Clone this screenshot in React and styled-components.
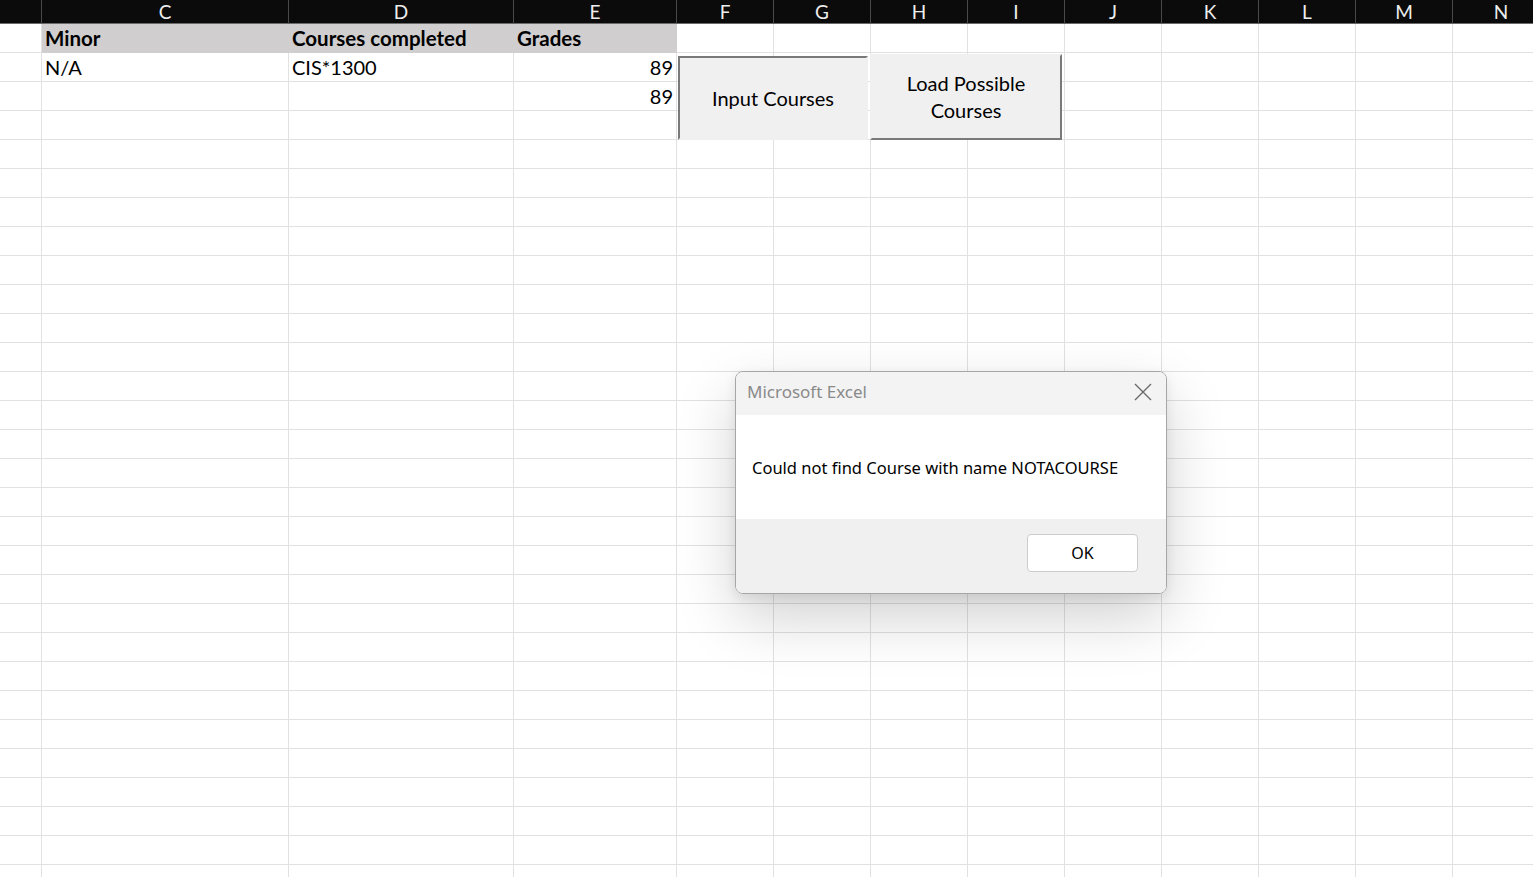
import React from "react";
import styled, { createGlobalStyle } from "styled-components";

const GlobalStyle = createGlobalStyle`
  html, body {
    margin: 0;
    padding: 0;
    background: #ffffff;
    overflow: hidden;
  }
  * { box-sizing: border-box; }
`;

const COLS = [42, 247, 225, 163, 97, 97, 97, 97, 97, 97, 97, 97, 97];
const LETTERS = ["", "C", "D", "E", "F", "G", "H", "I", "J", "K", "L", "M", "N"];
const ROW_COUNT = 30;

// Fenêtre de la feuille
const Sheet = styled.div`
  position: relative;
  width: 1533px;
  height: 877px;
  overflow: hidden;
  font-family: Lato, "Liberation Sans", sans-serif;
`;

const Grid = styled.div`
  display: grid;
  grid-template-columns: ${COLS.map((w) => w + "px").join(" ")};
  grid-auto-rows: 29px;
  grid-template-rows: 24px;
`;

const ColHead = styled.div`
  background: #0b0b0b;
  color: #eeeeee;
  font-size: 19px;
  line-height: 23px;
  text-align: center;
  border-right: 1px solid #4a4a4a;
  border-bottom: 1px solid #6a6a6a;
`;

const Cell = styled.div`
  border-right: 1px solid ${(p) => (p.$filled ? "#d0cece" : "#e1e1e1")};
  border-bottom: 1px solid ${(p) => (p.$filled ? "#d0cece" : "#e1e1e1")};
  background: ${(p) => (p.$filled ? "#d0cece" : "#ffffff")};
  font-size: ${(p) => (p.$bold ? "20.5px" : "20px")};
  font-weight: ${(p) => (p.$bold ? 700 : 400)};
  color: #000;
  line-height: 29px;
  padding: 0 3px 0 3px;
  text-align: ${(p) => (p.$num ? "right" : "left")};
  white-space: nowrap;
  overflow: visible;
`;

// Boutons de formulaire posés sur la feuille
const FormButton = styled.div`
  position: absolute;
  left: ${(p) => p.$x}px;
  top: ${(p) => p.$y}px;
  width: ${(p) => p.$w}px;
  height: ${(p) => p.$h}px;
  background: #f0f0f0;
  display: flex;
  align-items: center;
  justify-content: center;
  text-align: center;
  font-size: 20px;
  line-height: 27px;
  color: #000;
  border-style: solid;
  border-width: 2px;
  border-color: ${(p) =>
    p.$pressed ? "#7a7a7a #f0f0f0 #f0f0f0 #7a7a7a" : "#f0f0f0 #7a7a7a #7a7a7a #f0f0f0"};
`;

const Dialog = styled.div`
  position: absolute;
  left: 735px;
  top: 371px;
  width: 432px;
  height: 223px;
  border: 1px solid #a6a6a6;
  border-radius: 8px;
  overflow: hidden;
  display: flex;
  flex-direction: column;
  box-shadow: 0 24px 60px rgba(0, 0, 0, 0.18), 0 4px 12px rgba(0, 0, 0, 0.08);
  font-family: "Noto Sans", "Open Sans", sans-serif;
`;

const TitleBar = styled.div`
  height: 43px;
  background: #f3f3f3;
  display: flex;
  align-items: center;
  justify-content: space-between;
  padding: 0 14px 4px 11px;
  color: #8a8a8a;
  font-size: 17px;
`;

const Body = styled.div`
  height: 104px;
  background: #ffffff;
  display: flex;
  align-items: center;
  padding: 0 16px 0 16px;
  font-size: 16.5px;
  color: #000;
`;

const Footer = styled.div`
  flex: 1;
  background: #f0f0f0;
  display: flex;
  justify-content: flex-end;
  align-items: flex-start;
  padding: 15px 28px 0 0;
`;

const OkButton = styled.button`
  width: 111px;
  height: 38px;
  background: #ffffff;
  border: 1px solid #cccccc;
  border-radius: 4px;
  font-family: "Noto Sans", "Open Sans", sans-serif;
  font-size: 16px;
  color: #000;
`;

function CloseIcon() {
  return (
    <svg width="18" height="18" viewBox="0 0 18 18">
      <path d="M1 1 L17 17 M17 1 L1 17" stroke="#6b6b6b" strokeWidth="1.4" fill="none" />
    </svg>
  );
}

function App() {
  const data = {
    0: { 1: { text: "Minor", bold: true, filled: true }, 2: { text: "Courses completed", bold: true, filled: true }, 3: { text: "Grades", bold: true, filled: true } },
    1: { 1: { text: "N/A" }, 2: { text: "CIS*1300" }, 3: { text: "89", num: true } },
    2: { 3: { text: "89", num: true } },
  };

  const rows = [];
  for (let r = 0; r < ROW_COUNT; r++) {
    COLS.forEach((_, c) => {
      const d = (data[r] && data[r][c]) || {};
      rows.push(
        <Cell key={`${r}-${c}`} $filled={d.filled} $bold={d.bold} $num={d.num}>
          {d.text}
        </Cell>
      );
    });
  }

  return (
    <>
      <GlobalStyle />
      <Sheet>
        <Grid>
          {LETTERS.map((l, i) => (
            <ColHead key={i}>{l}</ColHead>
          ))}
          {rows}
        </Grid>

        <FormButton $x={678} $y={56} $w={190} $h={84} $pressed>
          Input Courses
        </FormButton>
        <FormButton $x={870} $y={54} $w={192} $h={86}>
          Load Possible
          <br />
          Courses
        </FormButton>

        <Dialog>
          <TitleBar>
            <span>Microsoft Excel</span>
            <CloseIcon />
          </TitleBar>
          <Body>Could not find Course with name NOTACOURSE</Body>
          <Footer>
            <OkButton>OK</OkButton>
          </Footer>
        </Dialog>
      </Sheet>
    </>
  );
}

export default App;
